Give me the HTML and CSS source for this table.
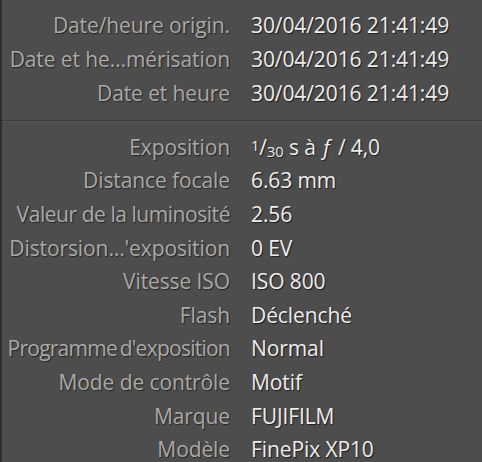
FILE: index.html
```html
<!DOCTYPE html>
<html lang="fr">
<head>
<meta charset="utf-8">
<title>Métadonnées</title>
<link rel="stylesheet" href="styles.css">
</head>
<body>
<div class="panel">
  <div class="group">
    <div class="row"><span class="label">Date/heure origin.</span><span class="value">30/04/2016 21:41:49</span></div>
    <div class="row"><span class="label">Date et he…mérisation</span><span class="value">30/04/2016 21:41:49</span></div>
    <div class="row"><span class="label">Date et heure</span><span class="value">30/04/2016 21:41:49</span></div>
  </div>
  <div class="divider"></div>
  <div class="group group-exif">
    <div class="row"><span class="label">Exposition</span><span class="value"><span class="frac"><sup>1</sup>/<sub>30</sub></span> s à <i class="f">ƒ</i> / 4,0</span></div>
    <div class="row"><span class="label">Distance focale</span><span class="value">6.63 mm</span></div>
    <div class="row"><span class="label tight">Valeur de la luminosité</span><span class="value">2.56</span></div>
    <div class="row"><span class="label">Distorsion…'exposition</span><span class="value">0 EV</span></div>
    <div class="row"><span class="label">Vitesse ISO</span><span class="value">ISO 800</span></div>
    <div class="row"><span class="label">Flash</span><span class="value">Déclenché</span></div>
    <div class="row"><span class="label tighter">Programme d'exposition</span><span class="value">Normal</span></div>
    <div class="row"><span class="label">Mode de contrôle</span><span class="value">Motif</span></div>
    <div class="row"><span class="label">Marque</span><span class="value">FUJIFILM</span></div>
    <div class="row"><span class="label">Modèle</span><span class="value">FinePix XP10</span></div>
  </div>
</div>
</body>
</html>
```
FILE: styles.css
```css
html, body {
  margin: 0;
  padding: 0;
  background: #4d4d4d;
}
body {
  width: 482px;
  height: 462px;
  overflow: hidden;
}
.panel {
  height: 462px;
  border-left: 2px solid #2e2e2e;
  background: #4d4d4d;
  font-family: "Open Sans", sans-serif;
  font-size: 21px;
  letter-spacing: -0.1px;
  display: flex;
  flex-direction: column;
  padding-top: 8px;
  box-sizing: border-box;
}
.group {
  display: flex;
  flex-direction: column;
}
.row {
  display: grid;
  grid-template-columns: 228px 1fr;
  column-gap: 21px;
  height: 34px;
  align-items: center;
  white-space: nowrap;
}
.group-exif .row {
  height: 33.6px;
}
.label {
  text-align: right;
  color: #a9a9a9;
  text-shadow: 1px 1px 1px #262626;
}
.label.tight {
  letter-spacing: -0.45px;
}
.label.tighter {
  letter-spacing: -0.75px;
  word-spacing: -2px;
}
.value {
  color: #ededed;
  text-shadow: 1px 1px 1px #1e1e1e;
}
.divider {
  flex: none;
  height: 1px;
  background: #3a3a3a;
  border-bottom: 1px solid #555;
  margin: 10px 0 8px;
}
.frac sup {
  font-size: 0.7em;
  vertical-align: 0.3em;
}
.frac sub {
  font-size: 0.7em;
  vertical-align: -0.15em;
}
.f {
  font-style: italic;
}
```
